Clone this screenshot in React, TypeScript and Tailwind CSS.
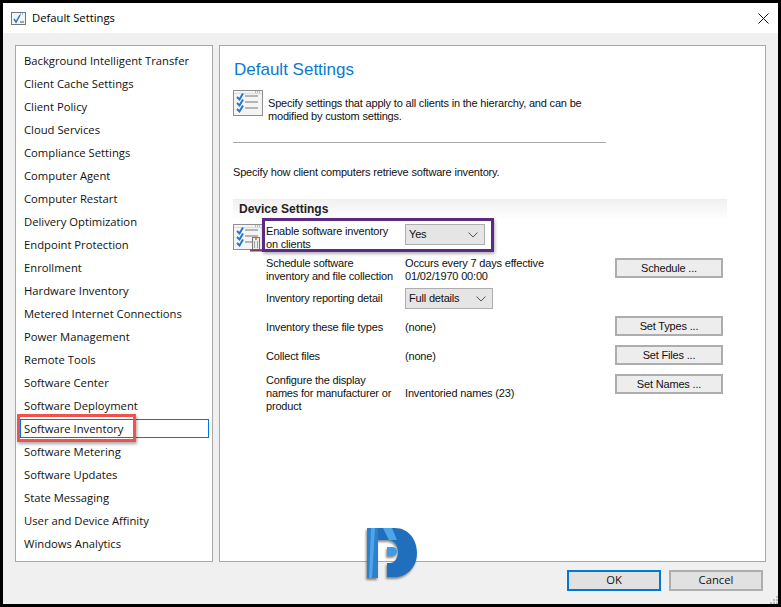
const categories = [
  "Background Intelligent Transfer",
  "Client Cache Settings",
  "Client Policy",
  "Cloud Services",
  "Compliance Settings",
  "Computer Agent",
  "Computer Restart",
  "Delivery Optimization",
  "Endpoint Protection",
  "Enrollment",
  "Hardware Inventory",
  "Metered Internet Connections",
  "Power Management",
  "Remote Tools",
  "Software Center",
  "Software Deployment",
  "Software Inventory",
  "Software Metering",
  "Software Updates",
  "State Messaging",
  "User and Device Affinity",
  "Windows Analytics",
];

function ChecklistIcon({ tower }: { tower?: boolean }) {
  return (
    <svg width="31" height="28" viewBox="0 0 31 28" className="block">
      <rect x="0.5" y="0.5" width="29" height="25" fill="#f4f4f4" stroke="#8f8f8f" />
      <path d="M1 3.500h28" stroke="#dcdcdc" />
      <path d="M22 2h6" stroke="#3b8bd8" strokeDasharray="1 1" />
      {[7, 13, 19].map((y) => (
        <g key={y}>
          <path d={`M4 ${y}l2.500 2.500 3.500-6`} fill="none" stroke="#1f78d1" strokeWidth="2" />
          <path d={`M12 ${y - 1}h13`} stroke="#777" />
        </g>
      ))}
      {tower && (
        <g>
          <rect x="19.500" y="13.500" width="7" height="12" fill="#ececec" stroke="#777" />
          <path d="M23 14v2" stroke="#e08a3c" strokeWidth="2" />
          <path d="M21.500 17v7M24.500 17v7" stroke="#a0a0a0" />
          <path d="M17 26.500h12" stroke="#7c3a5e" strokeWidth="2" />
        </g>
      )}
    </svg>
  );
}

function Logo() {
  return (
    <svg width="52" height="51" viewBox="0 0 52 51" className="overflow-visible drop-shadow-[-1px_2px_1px_rgba(0,0,0,0.45)]">
      <path d="M12 0H29C42 0 51 11 51 25C51 39 41 49 29 49H21V35H24C29 35 32 30 32 24C32 17 28 12 22 12H12Z" fill="#1f6fbd" />
      <path d="M1 0H12V50H1Z" fill="#2f7fcf" />
      <path d="M5 0H9L6 50H3ZM17 0H26L31 12H23Z" fill="#4ea6ea" />
      <path d="M21 19H26C29 19 31 21 31 23.500C31 26 29 28 26 28H21Z" fill="#3f9be6" />
    </svg>
  );
}

function SettingButton({ label }: { label: string }) {
  return (
    <button className="h-[20px] w-[108px] border-2 border-[#adadad] bg-[#ededed] text-center text-[11px] leading-[16px] tracking-[-0.18px] text-[#111]">
      {label}
    </button>
  );
}

function FakeSelect({ value, width }: { value: string; width: string }) {
  return (
    <div className={`flex h-[21px] items-center justify-between border border-[#adadad] bg-[#e5e5e5] pl-[3px] pr-[6px] ${width}`}>
      <span>{value}</span>
      <svg width="10" height="6" viewBox="0 0 10 6">
        <path d="M0.500 0.500L5 5l4.500-4.500" fill="none" stroke="#555" />
      </svg>
    </div>
  );
}

export default function App() {
  return (
    <div className="flex h-[607px] w-[781px] flex-col overflow-hidden border-x-[3px] border-b-[3px] border-t-[3px] border-black bg-[#f0f0f0] font-['Liberation_Sans',sans-serif] text-[11px] tracking-[-0.18px] text-[#111]">
      <div className="flex h-[30px] shrink-0 items-center justify-between bg-white pl-[8px] pr-[9px]">
        <div className="flex items-center gap-[6px]">
          <svg width="15" height="13" viewBox="0 0 15 13">
            <rect x="0.500" y="0.500" width="14" height="12" fill="#f4f4f4" stroke="#777" />
            <path d="M9 2h4" stroke="#3b8bd8" strokeDasharray="1 1" />
            <path d="M3 7l2 3 4-7" fill="none" stroke="#1f78d1" strokeWidth="1.500" />
            <path d="M9 10h4" stroke="#555" />
          </svg>
          <span className="font-['Open_Sans',sans-serif] text-[11.25px] tracking-normal text-black">Default Settings</span>
        </div>
        <svg width="11" height="11" viewBox="0 0 11 11">
          <path d="M0.500 0.500l10 10M10.500 0.500l-10 10" stroke="#111" />
        </svg>
      </div>

      <div className="flex h-[529px] shrink-0 gap-[6px] pl-[12px] pr-[12px] pt-[12px]">
        <div className="relative h-[517px] w-[198px] shrink-0 border border-[#a8a8a8] bg-white pl-[1px] pt-[3px] font-['Open_Sans',sans-serif] text-[11.25px] tracking-normal">
          {categories.map((name) => (
            <div
              key={name}
              className={
                name === "Software Inventory"
                  ? "mx-[3px] my-[2px] flex h-[19px] items-center border border-[#0078d7] pl-[3px] pt-[2px]"
                  : "mx-[3px] flex h-[23px] items-center pl-[4px] pt-[2px]"
              }
            >
              {name}
            </div>
          ))}
          <div className="absolute left-[1px] top-[368px] h-[28px] w-[119px] border-[3px] border-[#ef5350] shadow-[1px_2px_3px_rgba(0,0,0,0.35)]" />
        </div>

        <div className="relative h-[517px] flex-1 border border-[#a8a8a8] bg-white pl-[13px] pt-[14px]">
          <h1 className="ml-px h-[20px] text-[17px] leading-[20px] tracking-normal text-[#0a7ad0]">Default Settings</h1>
          <div className="mt-[10px] flex gap-[4px]">
            <ChecklistIcon />
            <p className="mt-[7px] w-[330px] leading-[13px]">
              Specify settings that apply to all clients in the hierarchy, and can be modified by custom settings.
            </p>
          </div>
          <div className="mt-[19px] h-px w-[373px] bg-[#a8a8a8]" />
          <p className="mt-[22px] leading-[14px]">Specify how client computers retrieve software inventory.</p>
          <div className="mt-[20px] h-[21px] w-[494px] bg-gradient-to-b from-[#f0f0f0] to-white pl-[6px] text-[12px] font-bold leading-[21px] tracking-normal text-[#222]">
            Device Settings
          </div>

          <div className="relative mt-[4px] w-[490px] pl-[33px] leading-[13px]">
            <div className="absolute left-0 top-0">
              <ChecklistIcon tower />
            </div>
            <div className="flex h-[33px]">
              <div className="w-[139px] pt-px">Enable software inventory<br />on clients</div>
              <FakeSelect value="Yes" width="w-[80px]" />
            </div>
            <div className="flex h-[31px] justify-between">
              <div className="flex">
                <div className="w-[139px]">Schedule software<br />inventory and file collection</div>
                <div className="w-[175px]">Occurs every 7 days effective<br />01/02/1970 00:00</div>
              </div>
              <div className="pt-px"><SettingButton label="Schedule ..." /></div>
            </div>
            <div className="flex h-[28px]">
              <div className="flex h-[21px] w-[139px] items-center">Inventory reporting detail</div>
              <FakeSelect value="Full details" width="w-[88px]" />
            </div>
            <div className="flex h-[29px] justify-between">
              <div className="flex h-[23px] items-center">
                <div className="w-[139px]">Inventory these file types</div>
                <div>(none)</div>
              </div>
              <SettingButton label="Set Types ..." />
            </div>
            <div className="flex h-[29px] justify-between">
              <div className="flex h-[23px] items-center">
                <div className="w-[139px]">Collect files</div>
                <div>(none)</div>
              </div>
              <SettingButton label="Set Files ..." />
            </div>
            <div className="flex justify-between">
              <div className="flex items-center">
                <div className="w-[139px]">Configure the display<br />names for manufacturer or<br />product</div>
                <div>Inventoried names (23)</div>
              </div>
              <SettingButton label="Set Names ..." />
            </div>
            <div className="absolute left-[29px] top-[-6px] h-[34px] w-[232px] border-[3px] border-[#5b2a86] shadow-[1px_2px_3px_rgba(0,0,0,0.3)]" />
          </div>
        </div>
      </div>

      <div className="relative flex flex-1 items-start justify-end gap-[8px] pr-[15px] pt-[8px] font-['Open_Sans',sans-serif] tracking-normal">
        <button className="h-[21px] w-[94px] border-2 border-[#0078d7] bg-[#e1e1e1] text-[11.25px]">OK</button>
        <button className="h-[21px] w-[94px] border-2 border-[#adadad] bg-[#e1e1e1] text-[11.25px]">Cancel</button>
        <div className="absolute left-[363px] top-[-34px]">
          <Logo />
        </div>
        <svg width="8" height="8" viewBox="0 0 8 8" className="absolute bottom-0 right-0">
          <path d="M6 0h2v2H6zM3 3h2v2H3zM6 3h2v2H6zM0 6h2v2H0zM3 6h2v2H3zM6 6h2v2H6z" fill="#bdbdbd" />
        </svg>
      </div>
    </div>
  );
}
